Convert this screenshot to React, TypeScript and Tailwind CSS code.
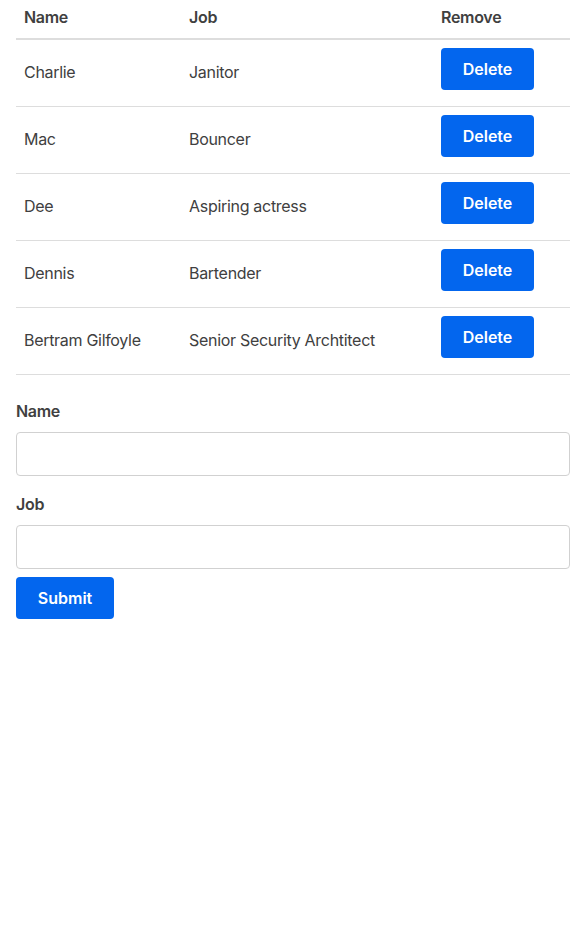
import React from "react";

const rows = [
  ["Charlie", "Janitor"],
  ["Mac", "Bouncer"],
  ["Dee", "Aspiring actress"],
  ["Dennis", "Bartender"],
  ["Bertram Gilfoyle", "Senior Security Archtitect"],
];

export default function App() {
  return (
    <div
      className="min-h-[934px] bg-white pl-4 pr-[11px] text-[16px] tracking-[-0.3px] text-[#404040]"
      style={{ fontFamily: "Inter, 'Noto Sans', sans-serif" }}
    >
      <table className="w-full border-collapse">
        <thead>
          <tr className="border-b-2 border-[#dddddd]">
            <th className="w-[165px] pl-2 pt-[5px] pb-[9px] text-left font-semibold leading-6">Name</th>
            <th className="w-[252px] pl-2 pt-[5px] pb-[9px] text-left font-semibold leading-6">Job</th>
            <th className="pl-2 pt-[5px] pb-[9px] text-left font-semibold leading-6">Remove</th>
          </tr>
        </thead>
        <tbody>
          {rows.map(([name, job]) => (
            <tr key={name} className="border-b border-[#dddddd]">
              <td className="pl-2 pb-[2px] align-middle leading-6">{name}</td>
              <td className="pl-2 pb-[2px] align-middle leading-6">{job}</td>
              <td className="pl-2 pt-2 pb-4 align-middle">
                <button className="flex h-[42px] w-[93px] items-center justify-center rounded-[4px] bg-[#0366ee] font-semibold tracking-normal text-white">
                  Delete
                </button>
              </td>
            </tr>
          ))}
        </tbody>
      </table>
      <form className="mt-6 flex flex-col" onSubmit={(e) => e.preventDefault()}>
        <label className="mb-[9px] font-semibold leading-6">Name</label>
        <input className="h-11 w-full rounded-[4px] border border-[#d1d1d1] px-3 outline-none" />
        <label className="mt-4 mb-[9px] font-semibold leading-6">Job</label>
        <input className="h-11 w-full rounded-[4px] border border-[#d1d1d1] px-3 outline-none" />
        <div className="mt-2">
          <button className="flex h-[42px] w-[98px] items-center justify-center rounded-[4px] bg-[#0366ee] font-semibold tracking-normal text-white">
            Submit
          </button>
        </div>
      </form>
    </div>
  );
}
